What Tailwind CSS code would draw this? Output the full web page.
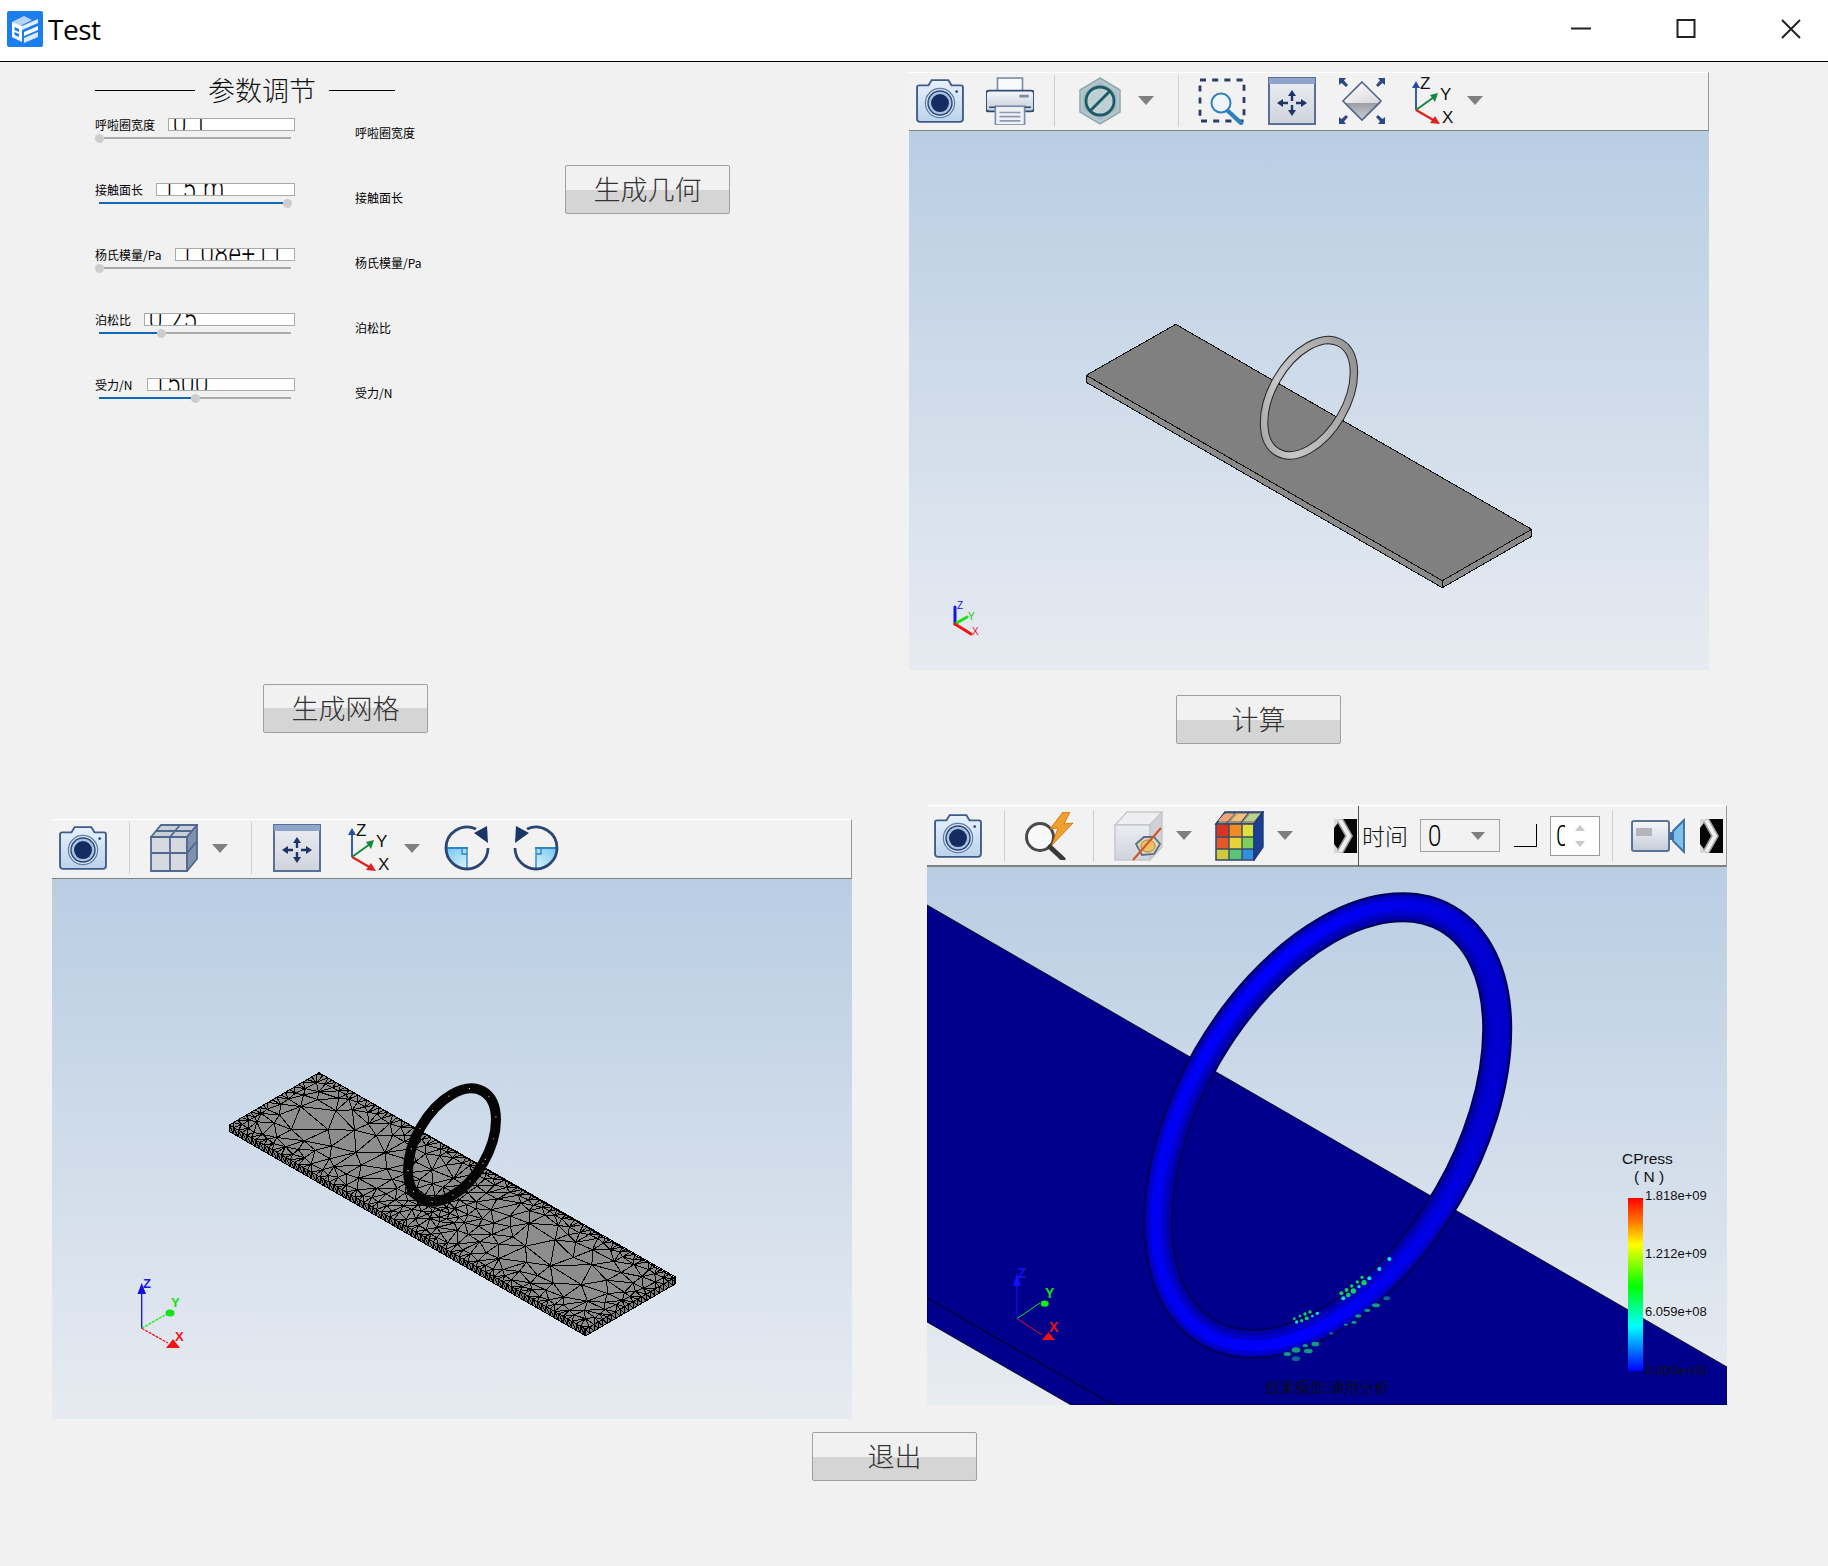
<!DOCTYPE html>
<html lang="zh">
<head>
<meta charset="utf-8">
<title>Test</title>
<script src="https://cdn.jsdelivr.net/npm/@tailwindcss/browser@4"></script>
</head>
<body class="bg-[#f1f1f1] font-['Noto_Sans_CJK_SC','Noto_Sans',sans-serif] text-black">

<svg class="absolute w-0 h-0" aria-hidden="true">
  <defs>
    <linearGradient id="gCam" x1="0" y1="0" x2="0" y2="1"><stop offset="0" stop-color="#e8f1fb"/><stop offset="1" stop-color="#bcd3ec"/></linearGradient>
    <linearGradient id="gBody" x1="0" y1="0" x2="0" y2="1"><stop offset="0" stop-color="#f6f8fb"/><stop offset="1" stop-color="#c5ccd8"/></linearGradient>
    <linearGradient id="gPan" x1="0" y1="0" x2="0" y2="1"><stop offset="0" stop-color="#eceef3"/><stop offset="1" stop-color="#cfd3dc"/></linearGradient>
    <linearGradient id="gDiaTop" x1="0" y1="0" x2="1" y2="1"><stop offset="0" stop-color="#ffffff"/><stop offset="1" stop-color="#d5d5d8"/></linearGradient>
    <linearGradient id="gDiaBot" x1="0" y1="0" x2="0" y2="1"><stop offset="0" stop-color="#9b9ea6"/><stop offset="1" stop-color="#d0d2d7"/></linearGradient>
    <linearGradient id="gQuad" x1="0" y1="0" x2="1" y2="1"><stop offset="0" stop-color="#6fc6ee"/><stop offset="1" stop-color="#dff3fc"/></linearGradient>
    <linearGradient id="gQuad2" x1="1" y1="0" x2="0" y2="1"><stop offset="0" stop-color="#6fc6ee"/><stop offset="1" stop-color="#dff3fc"/></linearGradient>
    <linearGradient id="gRing1" gradientUnits="userSpaceOnUse" x1="345" y1="320" x2="465" y2="210"><stop offset="0" stop-color="#8f8f8f"/><stop offset="0.3" stop-color="#c8c8c8"/><stop offset="0.65" stop-color="#a8a8a8"/><stop offset="1" stop-color="#767676"/></linearGradient>
    <linearGradient id="gRing3" gradientUnits="userSpaceOnUse" x1="150" y1="380" x2="600" y2="100"><stop offset="0" stop-color="#0000e6"/><stop offset="0.45" stop-color="#0000ff"/><stop offset="0.75" stop-color="#0000e0"/><stop offset="1" stop-color="#0000b4"/></linearGradient>
    <linearGradient id="gLegend" x1="0" y1="0" x2="0" y2="1"><stop offset="0" stop-color="#ff0000"/><stop offset="0.14" stop-color="#ff7a00"/><stop offset="0.27" stop-color="#ffff00"/><stop offset="0.51" stop-color="#00ff00"/><stop offset="0.74" stop-color="#00ffff"/><stop offset="1" stop-color="#0000ff"/></linearGradient>

    <symbol id="iCam" viewBox="1 2 46 44">
      <path d="M2 11 Q2 9 4 9 H13 L16 4 H32 L35 9 H44 Q46 9 46 11 V41 Q46 44 43 44 H5 Q2 44 2 41Z" fill="url(#gCam)" stroke="#3f5c88" stroke-width="1.8"/>
      <circle cx="24" cy="26" r="14" fill="#dbe8f6" stroke="#5f7da8" stroke-width="1.2"/>
      <circle cx="24" cy="26" r="11.5" fill="#a9c3e0" stroke="#2b4576" stroke-width="1.4"/>
      <circle cx="24" cy="26" r="8.6" fill="#152c60"/>
      <circle cx="40" cy="15" r="1.3" fill="#2b4576"/>
    </symbol>
    <symbol id="iPrint" viewBox="1 1 46 46">
      <rect x="12" y="2" width="24" height="14" fill="#f9fafc" stroke="#7d8ea8" stroke-width="1.6"/>
      <path d="M4 14 H44 Q47 14 47 17 V32 Q47 34 44 34 H4 Q1 34 1 32 V17 Q1 14 4 14Z" fill="url(#gBody)" stroke="#2f4a75" stroke-width="1.8"/>
      <rect x="33" y="18" width="9" height="2.6" fill="#7c8ba3"/>
      <rect x="10" y="29" width="28" height="18" fill="#eef1f5" stroke="#7d8ea8" stroke-width="1.6"/>
      <path d="M14 35 H34 M14 39 H34 M14 43 H34" stroke="#8d99ad" stroke-width="1.6"/>
      <path d="M4 30 H10 M38 30 H44" stroke="#2f4a75" stroke-width="1.4"/>
    </symbol>
    <symbol id="iHex" viewBox="0 0 48 48">
      <polygon points="24,1 44,13 44,35 24,47 4,35 4,13" fill="#b3c8cc" stroke="#8fa9ae" stroke-width="1.5"/>
      <polygon points="24,5 41,15 41,33 24,43 7,33 7,15" fill="#a6bcc1"/>
      <ellipse cx="24" cy="24" rx="14" ry="14" fill="#bdd0d2" stroke="#1d5a68" stroke-width="2.8"/>
      <path d="M14 34 L34 14" stroke="#1d5a68" stroke-width="2.8"/>
    </symbol>
    <symbol id="iZoomBox" viewBox="0 0 48 48">
      <rect x="2" y="3" width="44" height="41" fill="none" stroke="#2a3d66" stroke-width="2.8" stroke-dasharray="6 6.2"/>
      <circle cx="23" cy="26" r="9.5" fill="#eef5fb" stroke="#2f7fbf" stroke-width="2"/>
      <path d="M30 34 L43 46" stroke="#2f7fbf" stroke-width="4.4" stroke-linecap="round"/>
    </symbol>
    <symbol id="iPan" viewBox="0 0 48 48">
      <rect x="1" y="1" width="46" height="46" fill="url(#gPan)" stroke="#5b6f96" stroke-width="2"/>
      <rect x="1" y="1" width="46" height="6" fill="#8ea4c9"/>
      <path d="M24 13 L28 19 H25.2 V24 H22.8 V19 H20Z M24 39 L28 33 H25.2 V28 H22.8 V33 H20Z M9 26 L15 22 V24.8 H20 V27.2 H15 V30Z M39 26 L33 22 V24.8 H28 V27.2 H33 V30Z" fill="#1d3566"/>
    </symbol>
    <symbol id="iFit" viewBox="0 0 48 48">
      <polygon points="24,8 43,26 6,26" fill="url(#gDiaTop)"/>
      <polygon points="6,26 43,26 24,44" fill="url(#gDiaBot)"/>
      <polygon points="24,5 43,24 24,43 5,24" fill="none" stroke="#52668c" stroke-width="1.6"/>
      <path d="M1 1 H8 L6 3.4 L10 8 L8 10 L3.6 6 L1 8Z M47 1 H40 L42 3.4 L38 8 L40 10 L44.4 6 L47 8Z M1 47 H8 L6 44.6 L10 40 L8 38 L3.6 42 L1 40Z M47 47 H40 L42 44.6 L38 40 L40 38 L44.4 42 L47 40Z" fill="#2c4a82"/>
    </symbol>
    <symbol id="iAxes" viewBox="0 0 48 48">
      <path d="M8 33 V9" stroke="#274ca3" stroke-width="1.8"/><polygon points="8,4 12,11 4,11" fill="#274ca3"/>
      <path d="M8 33 L26 20" stroke="#148a3c" stroke-width="2"/><polygon points="30,16 27,25 22,18" fill="#148a3c"/>
      <path d="M8 33 L27 44" stroke="#e02020" stroke-width="2.2"/><polygon points="32,47 22,46 27,39" fill="#e02020"/>
      <text x="12" y="12" font-size="17" font-family="Liberation Sans" fill="#111">Z</text>
      <text x="32" y="23" font-size="17" font-family="Liberation Sans" fill="#111">Y</text>
      <text x="34" y="46" font-size="17" font-family="Liberation Sans" fill="#111">X</text>
    </symbol>
    <symbol id="iCube" viewBox="0 0 48 48">
      <polygon points="1,13 11,1 47,1 37,13" fill="#c9ced7" stroke="#52698f" stroke-width="1.8"/>
      <polygon points="1,13 37,13 37,47 1,47" fill="#d6d9df" stroke="#52698f" stroke-width="1.8"/>
      <polygon points="37,13 47,1 47,35 37,47" fill="#7f91ad" stroke="#52698f" stroke-width="1.8"/>
      <path d="M20 13 V47 M1 29 H37 L47 17 M20 13 L30 1 M6 7 H42" stroke="#52698f" stroke-width="1.8" fill="none"/>
    </symbol>
    <symbol id="iRot1" viewBox="0 0 48 48">
      <path d="M3 24 H24 V45 A21 21 0 0 1 3 24Z" fill="url(#gQuad)"/>
      <path d="M3 24 H25" stroke="#2c86c8" stroke-width="2"/>
      <path d="M24 24 V45 M19 24 V30 H24" stroke="#2c86c8" stroke-width="1.4" fill="none"/>
      <path d="M33 5 A21 21 0 0 0 3 24 A21 21 0 0 0 45 24" fill="none" stroke="#2b4672" stroke-width="2.8"/>
      <polygon points="31,9 44,2 45,19" fill="#1a3566"/>
    </symbol>
    <symbol id="iRot2" viewBox="0 0 48 48">
      <path d="M45 24 H24 V45 A21 21 0 0 0 45 24Z" fill="url(#gQuad2)"/>
      <path d="M45 24 H23" stroke="#2c86c8" stroke-width="2"/>
      <path d="M24 24 V45 M29 24 V30 H24" stroke="#2c86c8" stroke-width="1.4" fill="none"/>
      <path d="M15 5 A21 21 0 0 1 45 24 A21 21 0 0 1 3 24" fill="none" stroke="#2b4672" stroke-width="2.8"/>
      <polygon points="17,9 4,2 3,19" fill="#1a3566"/>
    </symbol>
    <symbol id="iFlash" viewBox="0 0 52 48">
      <circle cx="17" cy="25" r="13.5" fill="#f7f8fa" stroke="#4a4a4a" stroke-width="3"/>
      <path d="M27 35 L40 47" stroke="#3a3a3a" stroke-width="5" stroke-linecap="round"/>
      <polygon points="40,0 27,17 35,16 29,33 50,11 41,12 47,0" fill="#f0a030" stroke="#d97a10" stroke-width="1"/>
    </symbol>
    <symbol id="iEye" viewBox="0 0 50 50">
      <polygon points="1,14 13,1 48,1 36,14" fill="#eeeef1" stroke="#c8c8cc" stroke-width="1.4"/>
      <polygon points="1,14 36,14 36,49 1,49" fill="url(#gPan)" stroke="#c5c7cc" stroke-width="1.4"/>
      <polygon points="36,14 48,1 48,36 36,49" fill="#cfd1d6" stroke="#c5c7cc" stroke-width="1.4"/>
      <polygon points="22,33 30,26 40,26 46,33 40,43 28,44" fill="#e9d5a8" stroke="#5a6f8d" stroke-width="1.8"/>
      <ellipse cx="34" cy="35" rx="7" ry="6" fill="#eec264" stroke="#9a8a5a"/>
      <path d="M19 49 L47 17" stroke="#d2552a" stroke-width="2"/>
    </symbol>
    <symbol id="iColor" viewBox="0 0 50 50">
      <polygon points="2,13 11,1 49,1 40,13" fill="#9c8f72" stroke="#1c3a75" stroke-width="1.6"/>
      <path d="M12 13 L21 1 M26 13 L35 1" stroke="#1c3a75" stroke-width="1"/>
      <polygon points="4,10 10,3 20,3 14,10" fill="#f0a27a"/><polygon points="17,10 23,3 33,3 27,10" fill="#f1c27a"/><polygon points="30,10 36,3 46,3 40,10" fill="#b6d58a"/>
      <rect x="2" y="13" width="13" height="13" fill="#d83326"/><rect x="15" y="13" width="13" height="13" fill="#ef8a25"/><rect x="28" y="13" width="12" height="13" fill="#dce03e"/>
      <rect x="2" y="26" width="13" height="12" fill="#e2582a"/><rect x="15" y="26" width="13" height="12" fill="#e7d23a"/><rect x="28" y="26" width="12" height="12" fill="#7fd05a"/>
      <rect x="2" y="38" width="13" height="11" fill="#cfc93e"/><rect x="15" y="38" width="13" height="11" fill="#5cc47a"/><rect x="28" y="38" width="12" height="11" fill="#2f8fe0"/>
      <path d="M15 13 V49 M28 13 V49 M2 26 H40 M2 38 H40" stroke="#3a4d60" stroke-width="1.4"/>
      <rect x="2" y="13" width="38" height="36" fill="none" stroke="#3a4d70" stroke-width="1.6"/>
      <polygon points="40,13 49,1 49,36 40,49" fill="#1c3f96" stroke="#1c3a75" stroke-width="1.4"/>
    </symbol>
    <symbol id="iVideo" viewBox="0 0 54 36">
      <rect x="1" y="3" width="37" height="30" rx="2" fill="url(#gBody)" stroke="#5b7299" stroke-width="2"/>
      <rect x="5" y="10" width="16" height="8" fill="#b4b6bb"/>
      <polygon points="38,14 42,14 42,22 38,22" fill="#4c6b9c"/>
      <polygon points="42,13 53,2 53,34 42,23" fill="#7ec0e8" stroke="#3a6d9f" stroke-width="1.8"/>
    </symbol>
    <symbol id="iChev" viewBox="0 0 23 34">
      <rect width="23" height="34" fill="#060606"/>
      <polygon points="0,0 7,0 0,9" fill="#d8d8d8"/>
      <polygon points="0,34 7,34 0,25" fill="#d8d8d8"/>
      <path d="M6 1 L15 17 L6 33" fill="none" stroke="#9a9a9a" stroke-width="7"/>
      <path d="M6 1 L15 17 L6 33" fill="none" stroke="#f0f0f0" stroke-width="4"/>
    </symbol>
    <symbol id="iTri" viewBox="0 0 16 9"><polygon points="0,0 16,0 8,9" fill="#7f7f7f"/></symbol>
  </defs>
</svg>

<header class="h-[62px] pb-[4px] bg-white border-b border-black flex items-center">
  <svg class="w-[36px] h-[36px] ml-[7px] shrink-0" viewBox="0 0 36 36">
    <rect width="36" height="36" rx="2" fill="#1b7eee"/>
    <polygon points="5,11 17,5 25,9 13,15" fill="#b8d4f5"/>
    <polygon points="5,11 15,15 15,31 5,26" fill="#fff"/>
    <polygon points="7.5,16 12,18 12,21 7.5,19" fill="#1b7eee"/>
    <polygon points="7.5,21 12,23 12,26 7.5,24" fill="#1b7eee"/>
    <polygon points="15,15 31,8 31,12 15,19" fill="#e6f0fc"/>
    <polygon points="17,21 31,15 31,19 17,25" fill="#fff"/>
    <polygon points="17,27 31,21 31,26 17,32" fill="#dce9f9"/>
  </svg>
  <span class="ml-[5px] text-[28px] leading-none tracking-[-0.5px] font-['Open_Sans',sans-serif]">Test</span>
  <div class="ml-auto mr-[27px] flex items-center gap-[85px]">
    <svg class="w-[20px] h-[20px]" viewBox="0 0 20 20"><path d="M0 9.5 H20" stroke="#222" stroke-width="2"/></svg>
    <svg class="w-[20px] h-[20px]" viewBox="0 0 20 20"><rect x="1.5" y="1" width="17" height="17" fill="none" stroke="#222" stroke-width="2"/></svg>
    <svg class="w-[20px] h-[20px]" viewBox="0 0 20 20"><path d="M1 1 L19 19 M19 1 L1 19" stroke="#222" stroke-width="2"/></svg>
  </div>
</header>

<main>
  <!-- upper row -->
  <section class="flex h-[743px]">
    <div class="w-[909px] shrink-0">
      <div class="h-[56px] pl-[95px] flex items-center">
        <div class="w-[100px] h-px bg-black"></div>
        <div class="mx-[13px] pb-[2px] text-[27px] leading-none text-[#111] font-light">参数调节</div>
        <div class="w-[66px] h-px bg-black"></div>
      </div>
      <div class="flex pl-[95px] h-[325px]">
        <div class="w-[470px] shrink-0 text-[12px] leading-[13px]">
          <div class="flex h-[65px]">
            <div class="w-[200px]">
              <div class="flex justify-between items-center h-[13px]"><span>呼啦圈宽度</span>
                <div class="w-[127px] h-[13px] bg-white border border-[#aaa] overflow-hidden flex items-center pl-[4px] text-[24px] tracking-[0.7px] font-light font-['Roboto',sans-serif]"><span class="inline-block scale-y-[1.35]">0.1</span></div></div>
              <div class="flex items-center h-[10px] mt-[2px]"><div class="w-[9px] h-[9px] rounded-full bg-[#cdcdcd]"></div><div class="flex-1 h-[2px] bg-[#aaa] mr-[4px]"></div></div>
            </div>
            <div class="ml-[60px] mt-[8px]">呼啦圈宽度</div>
          </div>
          <div class="flex h-[65px]">
            <div class="w-[200px]">
              <div class="flex justify-between items-center h-[13px]"><span>接触面长</span>
                <div class="w-[139px] h-[13px] bg-white border border-[#aaa] overflow-hidden flex items-center pl-[5px] text-[24px] tracking-[0.7px] font-light font-['Roboto',sans-serif] whitespace-pre"><span class="inline-block scale-y-[1.35]">1.5 m</span></div></div>
              <div class="flex items-center h-[10px] mt-[2px]"><div class="ml-[4px] w-[184px] h-[2px] bg-[#0f68b8]"></div><div class="w-[9px] h-[9px] rounded-full bg-[#cdcdcd]"></div></div>
            </div>
            <div class="ml-[60px] mt-[8px]">接触面长</div>
          </div>
          <div class="flex h-[65px]">
            <div class="w-[200px]">
              <div class="flex justify-between items-center h-[13px]"><span>杨氏模量/Pa</span>
                <div class="w-[120px] h-[13px] bg-white border border-[#aaa] overflow-hidden flex items-center pl-[4px] text-[24px] tracking-[0.7px] font-light font-['Roboto',sans-serif]"><span class="inline-block scale-y-[1.35]">1.08e+11</span></div></div>
              <div class="flex items-center h-[10px] mt-[2px]"><div class="w-[9px] h-[9px] rounded-full bg-[#cdcdcd]"></div><div class="flex-1 h-[2px] bg-[#aaa] mr-[4px]"></div></div>
            </div>
            <div class="ml-[60px] mt-[8px]">杨氏模量/Pa</div>
          </div>
          <div class="flex h-[65px]">
            <div class="w-[200px]">
              <div class="flex justify-between items-center h-[13px]"><span>泊松比</span>
                <div class="w-[151px] h-[13px] bg-white border border-[#aaa] overflow-hidden flex items-center pl-[4px] text-[24px] tracking-[0.7px] font-light font-['Roboto',sans-serif]"><span class="inline-block scale-y-[1.35]">0.25</span></div></div>
              <div class="flex items-center h-[10px] mt-[2px]"><div class="ml-[4px] w-[58px] h-[2px] bg-[#0f68b8]"></div><div class="w-[9px] h-[9px] rounded-full bg-[#cdcdcd]"></div><div class="flex-1 h-[2px] bg-[#aaa] mr-[4px]"></div></div>
            </div>
            <div class="ml-[60px] mt-[8px]">泊松比</div>
          </div>
          <div class="flex h-[65px]">
            <div class="w-[200px]">
              <div class="flex justify-between items-center h-[13px]"><span>受力/N</span>
                <div class="w-[148px] h-[13px] bg-white border border-[#aaa] overflow-hidden flex items-center pl-[5px] text-[24px] tracking-[0.7px] font-light font-['Roboto',sans-serif]"><span class="inline-block scale-y-[1.35]">1500</span></div></div>
              <div class="flex items-center h-[10px] mt-[2px]"><div class="ml-[4px] w-[92px] h-[2px] bg-[#0f68b8]"></div><div class="w-[9px] h-[9px] rounded-full bg-[#cdcdcd]"></div><div class="flex-1 h-[2px] bg-[#aaa] mr-[4px]"></div></div>
            </div>
            <div class="ml-[60px] mt-[8px]">受力/N</div>
          </div>
        </div>
        <button class="w-[165px] h-[49px] mt-[47px] pb-[3px] rounded-[2px] border border-[#a0a0a0] bg-linear-to-b from-[#f1f1f1] from-50% to-[#d5d5d5] to-50% text-[27px] leading-none text-[#333] font-light">生成几何</button>
      </div>
      <button class="ml-[263px] mt-[241px] pb-[3px] w-[165px] h-[49px] rounded-[2px] border border-[#a0a0a0] bg-linear-to-b from-[#f1f1f1] from-50% to-[#d5d5d5] to-50% text-[27px] leading-none text-[#333] font-light">生成网格</button>
    </div>

    <div class="w-[800px] mt-[10px]">
      <div class="h-[59px] pb-[2px] bg-[#f2f2f2] border-t border-white border-r border-r-[#999] border-b border-b-[#808080] flex items-center">
        <svg class="w-12 h-12 shrink-0 ml-[7px]"><use href="#iCam"/></svg>
        <svg class="w-12 h-12 shrink-0 ml-[22px]"><use href="#iPrint"/></svg>
        <div class="w-px h-[52px] bg-[#d0d0d0] ml-[20px]"></div>
        <svg class="w-12 h-12 shrink-0 ml-[21px]"><use href="#iHex"/></svg>
        <svg class="w-4 h-[9px] shrink-0 ml-[14px]"><use href="#iTri"/></svg>
        <div class="w-px h-[52px] bg-[#d0d0d0] ml-[24px]"></div>
        <svg class="w-12 h-12 shrink-0 ml-[19px]"><use href="#iZoomBox"/></svg>
        <svg class="w-12 h-12 shrink-0 ml-[22px]"><use href="#iPan"/></svg>
        <svg class="w-12 h-12 shrink-0 ml-[22px]"><use href="#iFit"/></svg>
        <svg class="w-12 h-12 shrink-0 ml-[22px]"><use href="#iAxes"/></svg>
        <svg class="w-4 h-[9px] shrink-0 ml-[11px]"><use href="#iTri"/></svg>
      </div>
      <svg class="block w-[800px] h-[539px] bg-linear-to-b from-[#b9cde3] to-[#e7ebf1]" viewBox="0 0 800 539">
        <polygon points="177.3,244.3 533.3,449.7 533.3,456.7 177.3,251.3" fill="#8a8a8a" stroke="#111" shape-rendering="crispEdges"/>
        <polygon points="533.3,449.7 622.7,398.3 622.7,405.3 533.3,456.7" fill="#8a8a8a" stroke="#111" shape-rendering="crispEdges"/>
        <polygon points="266.7,193.3 622.7,398.3 533.3,449.7 177.3,244.3" fill="#808080" stroke="#111" shape-rendering="crispEdges"/>
        <g transform="rotate(30 400 266.7)">
          <ellipse cx="400" cy="266.7" rx="37" ry="63" fill="none" stroke="#262626" stroke-width="8.5"/>
          <ellipse cx="400" cy="266.7" rx="37" ry="63" fill="none" stroke="url(#gRing1)" stroke-width="6.5"/>
        </g>
        <g stroke-linecap="round">
          <path d="M46 493 V476" stroke="#1414e6" stroke-width="3"/>
          <path d="M46 493 L58 486" stroke="#14e614" stroke-width="3"/>
          <path d="M46 493 L62 503" stroke="#f01414" stroke-width="3"/>
        </g>
        <text x="48" y="478" font-size="10" font-family="Liberation Sans" fill="#1414e6">Z</text>
        <text x="59" y="489" font-size="10" font-family="Liberation Sans" fill="#14c814">Y</text>
        <text x="63" y="504" font-size="10" font-family="Liberation Sans" fill="#e61414">X</text>
      </svg>
      <button class="ml-[267px] mt-[25px] pb-[3px] w-[165px] h-[49px] rounded-[2px] border border-[#a0a0a0] bg-linear-to-b from-[#f1f1f1] from-50% to-[#d5d5d5] to-50% text-[27px] leading-none text-[#333] font-light">计算</button>
    </div>
  </section>

  <!-- lower row -->
  <section class="flex items-start h-[614px]">
    <div class="w-[800px] ml-[52px] mt-[14px] shrink-0">
      <div class="h-[60px] pb-[2px] bg-[#f2f2f2] border-t border-white border-r border-r-[#999] border-b border-b-[#808080] flex items-center">
        <svg class="w-12 h-12 shrink-0 ml-[7px]"><use href="#iCam"/></svg>
        <div class="w-px h-[52px] bg-[#d0d0d0] ml-[22px]"></div>
        <svg class="w-12 h-12 shrink-0 ml-[20px]"><use href="#iCube"/></svg>
        <svg class="w-4 h-[9px] shrink-0 ml-[14px]"><use href="#iTri"/></svg>
        <div class="w-px h-[52px] bg-[#d0d0d0] ml-[23px]"></div>
        <svg class="w-12 h-12 shrink-0 ml-[21px]"><use href="#iPan"/></svg>
        <svg class="w-12 h-12 shrink-0 ml-[23px]"><use href="#iAxes"/></svg>
        <svg class="w-4 h-[9px] shrink-0 ml-[12px]"><use href="#iTri"/></svg>
        <svg class="w-12 h-12 shrink-0 ml-[23px]"><use href="#iRot1"/></svg>
        <svg class="w-12 h-12 shrink-0 ml-[21px]"><use href="#iRot2"/></svg>
      </div>
      <svg class="block w-[800px] h-[540px] bg-linear-to-b from-[#b9cde3] to-[#e7ebf1]" viewBox="0 0 800 540">
        <polygon points="177.3,246 533.7,450.3 622.3,399 622.3,405.5 533.7,456.8 177.3,252.5" fill="#808080" stroke="#000" shape-rendering="crispEdges"/>
        <polygon points="267,193.7 622.3,399 533.7,450.3 177.3,246" fill="#8d8d8d" stroke="#000" shape-rendering="crispEdges"/>
        <path id="meshSide" d="" fill="none" stroke="#000" stroke-width="1" shape-rendering="crispEdges"/>
        <path id="meshTop" d="" fill="none" stroke="#000" stroke-width="1" shape-rendering="crispEdges"/>
        <g transform="rotate(30 400 266)">
          <ellipse cx="400" cy="266" rx="36" ry="62" fill="none" stroke="#050505" stroke-width="10"/>
          <ellipse cx="400" cy="266" rx="36" ry="62" fill="none" stroke="#fff" stroke-width="1" stroke-dasharray="1 21"/>
        </g>
        <path d="M89.7 449.3 V412" stroke="#1010e0" stroke-width="1.3"/>
        <polygon points="89.7,404 94,415 85.5,415" fill="#1010e0"/>
        <path d="M89.7 449.3 L113 436" stroke="#1cf01c" stroke-width="1.3" stroke-dasharray="3 1"/>
        <ellipse cx="118" cy="434" rx="4.5" ry="3.6" fill="#14e014"/>
        <path d="M89.7 449.3 L116 464" stroke="#f01414" stroke-width="1.3" stroke-dasharray="3 1"/>
        <polygon points="121,460 128,469 114,469" fill="#f01414"/>
        <text x="91" y="409" font-size="13" font-weight="700" font-family="Liberation Sans" fill="#1c1ce0">Z</text>
        <text x="119" y="428" font-size="13" font-weight="700" font-family="Liberation Sans" fill="#14e014">Y</text>
        <text x="123" y="462" font-size="13" font-weight="700" font-family="Liberation Sans" fill="#f01414">X</text>
      </svg>
    </div>

    <div class="w-[800px] ml-[75px] shrink-0">
      <div class="h-[62px] bg-[#f2f2f2] border-t border-white border-r border-r-[#999] border-b-2 border-b-[#808080] flex items-center">
        <svg class="w-12 h-12 shrink-0 ml-[7px]"><use href="#iCam"/></svg>
        <div class="w-px h-[52px] bg-[#d0d0d0] ml-[22px]"></div>
        <svg class="w-[52px] h-12 shrink-0 ml-[18px]"><use href="#iFlash"/></svg>
        <div class="w-px h-[52px] bg-[#d0d0d0] ml-[18px]"></div>
        <svg class="w-[50px] h-[50px] shrink-0 ml-[20px]"><use href="#iEye"/></svg>
        <svg class="w-4 h-[9px] shrink-0 ml-[12px]"><use href="#iTri"/></svg>
        <svg class="w-[50px] h-[50px] shrink-0 ml-[22px]"><use href="#iColor"/></svg>
        <svg class="w-4 h-[9px] shrink-0 ml-[13px]"><use href="#iTri"/></svg>
        <svg class="w-[23px] h-[34px] shrink-0 ml-[41px]"><use href="#iChev"/></svg>
        <div class="w-px h-[60px] bg-[#555] ml-[1px]"></div>
        <span class="ml-[3px] w-[46px] text-[23px] leading-none text-[#111] font-light whitespace-nowrap">时间</span>
        <div class="ml-[12px] w-[80px] h-[33px] border border-[#a0a0a0] flex items-center pl-[7px] overflow-hidden">
          <span class="inline-block scale-y-[1.25] text-[24px] leading-none font-light font-['Roboto',sans-serif]">0</span>
          <svg class="w-[14px] h-[8px] shrink-0 ml-auto mr-[14px]"><use href="#iTri"/></svg>
        </div>
        <div class="ml-[14px] w-[23px] h-[23px] border-r border-b border-black"></div>
        <div class="ml-[13px] w-[50px] h-[40px] bg-white border border-[#999] flex items-center pl-[5px] relative">
          <div class="w-[9px] h-[24px] overflow-hidden"><span class="block scale-y-[1.25] text-[24px] leading-[24px] font-light font-['Roboto',sans-serif]">0</span></div>
          <svg class="absolute right-[13px] top-[7px] w-[12px] h-[24px]" viewBox="0 0 12 24"><path d="M1 7 L6 1 L11 7Z M1 17 L6 23 L11 17Z" fill="#c9c9c9"/></svg>
        </div>
        <div class="w-px h-[52px] bg-[#d0d0d0] ml-[12px]"></div>
        <svg class="w-[54px] h-[36px] shrink-0 ml-[18px]"><use href="#iVideo"/></svg>
        <svg class="w-[23px] h-[34px] shrink-0 ml-[15px]"><use href="#iChev"/></svg>
      </div>
      <svg class="block w-[800px] h-[538px] bg-linear-to-b from-[#b9cde3] to-[#e8ecf1]" viewBox="0 0 800 538">
        <polygon points="0,38 800,500 800,538 144,538 0,455" fill="#00008c" stroke="#000" stroke-width="0.8"/>
        <path d="M0 431 L190 540" stroke="#000" fill="none"/>
        <g transform="rotate(30 400.6 258.6)" fill="none">
          <ellipse cx="400.6" cy="258.6" rx="139" ry="239" stroke="#00005a" stroke-width="30"/>
          <ellipse cx="400.6" cy="258.6" rx="139" ry="239" stroke="#0000a8" stroke-width="26"/>
          <ellipse cx="400.6" cy="258.6" rx="140.5" ry="240.5" stroke="#0000c8" stroke-width="20"/>
          <ellipse cx="400.6" cy="258.6" rx="141" ry="241" stroke="url(#gRing3)" stroke-width="11"/>
        </g>
        <g transform="translate(313 263) scale(0.3333)">
          <g fill="#12e0e0">
            <circle cx="448" cy="387" r="6"/><circle cx="418" cy="417" r="6"/><circle cx="388" cy="445" r="6"/>
            <circle cx="357" cy="470" r="5"/><circle cx="310" cy="505" r="6"/><circle cx="232" cy="550" r="5"/><circle cx="217" cy="558" r="4"/>
            <circle cx="170" cy="576" r="5"/>
          </g>
          <g fill="#12d060">
            <circle cx="372" cy="458" r="8"/><circle cx="366" cy="442" r="5"/><circle cx="352" cy="456" r="5"/><circle cx="340" cy="483" r="8"/><circle cx="335" cy="468" r="5"/><circle cx="320" cy="480" r="6"/><circle cx="325" cy="495" r="7"/><circle cx="304" cy="490" r="6"/>
            <circle cx="210" cy="546" r="5"/><circle cx="195" cy="552" r="5"/><circle cx="200" cy="565" r="6"/><circle cx="185" cy="572" r="5"/><circle cx="180" cy="558" r="4"/><circle cx="163" cy="566" r="4"/>
          </g>
          <g fill="#109a80">
            <ellipse cx="168" cy="660" rx="13" ry="8"/><ellipse cx="142" cy="672" rx="11" ry="6"/><ellipse cx="205" cy="663" rx="13" ry="7"/><ellipse cx="226" cy="642" rx="12" ry="7"/><ellipse cx="196" cy="647" rx="8" ry="5"/><ellipse cx="382" cy="541" rx="9" ry="5"/><ellipse cx="408" cy="526" rx="12" ry="6"/><ellipse cx="355" cy="558" rx="9" ry="5"/><ellipse cx="342" cy="577" rx="8" ry="5"/><ellipse cx="318" cy="584" rx="6" ry="3"/>
          </g>
          <g fill="#0a6a90"><ellipse cx="168" cy="686" rx="12" ry="7"/><ellipse cx="440" cy="505" rx="10" ry="6"/><ellipse cx="274" cy="610" rx="6" ry="4"/></g>
        </g>
        <path d="M90 451.5 V412" stroke="#1010ff" stroke-width="1"/>
        <polygon points="90,406 94,419 86,419" fill="#1010ff"/>
        <path d="M90 451.5 L113 436" stroke="#10f010" stroke-width="1"/>
        <ellipse cx="117.7" cy="436.6" rx="4" ry="3.2" fill="#10f010"/>
        <path d="M90 451.5 L115 468" stroke="#f01010" stroke-width="1"/>
        <polygon points="121.6,465 128,473 115,473" fill="#f01010"/>
        <text x="90.5" y="411" font-size="14" font-weight="700" font-family="Liberation Sans" fill="#1414e0">Z</text>
        <text x="118" y="431" font-size="14" font-weight="700" font-family="Liberation Sans" fill="#10e010">Y</text>
        <text x="122" y="465" font-size="14" font-weight="700" font-family="Liberation Sans" fill="#f01010">X</text>

        <text x="695" y="297" font-size="15.5" font-family="Liberation Sans" fill="#111">CPress</text>
        <text x="722" y="315" font-size="15.5" text-anchor="middle" font-family="Liberation Sans" fill="#111">( N )</text>
        <rect x="701" y="331" width="15" height="173" fill="url(#gLegend)"/>
        <g font-size="13" font-family="Liberation Sans" fill="#111">
          <text x="718" y="333">1.818e+09</text>
          <text x="718" y="391">1.212e+09</text>
          <text x="718" y="449">6.059e+08</text>
          <text x="718" y="508">0.000e+00</text>
        </g>
        <text x="338" y="526" font-size="15" font-family="Noto Sans CJK SC" fill="#0a0a20">结果模型:通用分析</text>
      </svg>
    </div>
  </section>

  <button class="block ml-[812px] mt-[13px] pb-[3px] w-[165px] h-[49px] rounded-[2px] border border-[#a0a0a0] bg-linear-to-b from-[#f1f1f1] from-50% to-[#d5d5d5] to-50% text-[27px] leading-none text-[#333] font-light">退出</button>
</main>

<script>
(function () {
  var D = [177.3, 246], C = [533.7, 450.3], A = [267, 193.7];
  var L = 411, W = 103, cU = 203, cV = 31, seed = 12345;
  function rnd() { seed = (seed * 1664525 + 1013904223) >>> 0; return seed / 4294967296; }
  function h(U, V) {
    var e = Math.min(V, W - V, U, L - U);
    var c = Math.hypot(U - cU, V - cV);
    return Math.min(4 + e * 0.38, 4.5 + c * 0.14, 21);
  }
  var pts = [];
  function add(U, V) { pts.push([U + rnd() * 0.01, V + rnd() * 0.01]); }
  var x, botU = [], rightV = [];
  for (x = 0; x < L; x += h(x, 0) + 1) { add(x, 0); add(x, W); botU.push(x); }
  add(L, 0); add(L, W); botU.push(L);
  for (x = 4.5; x < W - 2; x += 5) { add(0, x); add(L, x); rightV.push(x); }
  rightV.unshift(0); rightV.push(W);
  for (var k = 0; k < 16000; k++) {
    var U = rnd() * L, V = rnd() * W, r = h(U, V), ok = true;
    if (U < 3 || U > L - 3 || V < 3 || V > W - 3) continue;
    for (var j = 0; j < pts.length; j++) {
      if (Math.hypot(pts[j][0] - U, pts[j][1] - V) < r) { ok = false; break; }
    }
    if (ok) add(U, V);
  }
  var n = pts.length;
  var P = pts.concat([[-3000, -3000], [4000, -3000], [200, 5000]]);
  var T = [[n, n + 1, n + 2]];
  function inCircle(a, b, c, p) {
    var d = 2 * (a[0] * (b[1] - c[1]) + b[0] * (c[1] - a[1]) + c[0] * (a[1] - b[1]));
    if (Math.abs(d) < 1e-12) return false;
    var a2 = a[0] * a[0] + a[1] * a[1], b2 = b[0] * b[0] + b[1] * b[1], c2 = c[0] * c[0] + c[1] * c[1];
    var ux = (a2 * (b[1] - c[1]) + b2 * (c[1] - a[1]) + c2 * (a[1] - b[1])) / d;
    var uy = (a2 * (c[0] - b[0]) + b2 * (a[0] - c[0]) + c2 * (b[0] - a[0])) / d;
    var r2 = (a[0] - ux) * (a[0] - ux) + (a[1] - uy) * (a[1] - uy);
    return (p[0] - ux) * (p[0] - ux) + (p[1] - uy) * (p[1] - uy) < r2;
  }
  for (var i = 0; i < n; i++) {
    var good = [], edges = {};
    T.forEach(function (t) {
      if (inCircle(P[t[0]], P[t[1]], P[t[2]], P[i])) {
        [[t[0], t[1]], [t[1], t[2]], [t[2], t[0]]].forEach(function (e) {
          var key = Math.min(e[0], e[1]) + '_' + Math.max(e[0], e[1]);
          edges[key] = (edges[key] || 0) + 1;
        });
      } else good.push(t);
    });
    Object.keys(edges).forEach(function (key) {
      if (edges[key] === 1) { var s = key.split('_'); good.push([+s[0], +s[1], i]); }
    });
    T = good;
  }
  function map(p) {
    var u = p[0] / L, v = p[1] / W;
    return [D[0] + u * (C[0] - D[0]) + v * (A[0] - D[0]), D[1] + u * (C[1] - D[1]) + v * (A[1] - D[1])];
  }
  function f(q) { return q[0].toFixed(1) + ' ' + q[1].toFixed(1); }
  var seen = {}, d = '';
  T.forEach(function (t) {
    if (t[0] >= n || t[1] >= n || t[2] >= n) return;
    [[t[0], t[1]], [t[1], t[2]], [t[2], t[0]]].forEach(function (e) {
      var key = Math.min(e[0], e[1]) + '_' + Math.max(e[0], e[1]);
      if (seen[key]) return; seen[key] = 1;
      d += 'M' + f(map(P[e[0]])) + 'L' + f(map(P[e[1]]));
    });
  });
  document.getElementById('meshTop').setAttribute('d', d);
  var s = '', th = 6.5;
  function side(list) {
    for (var q = 0; q < list.length; q++) {
      var a = list[q];
      s += 'M' + f(a) + 'L' + f([a[0], a[1] + th]);
      if (q + 1 < list.length) {
        var b = list[q + 1];
        s += 'M' + f(a) + 'L' + f([b[0], b[1] + th]);
      }
    }
  }
  side(botU.map(function (u) { return map([u, 0]); }));
  side(rightV.map(function (v) { return map([L, v]); }));
  document.getElementById('meshSide').setAttribute('d', s);
})();
</script>
</body>
</html>
